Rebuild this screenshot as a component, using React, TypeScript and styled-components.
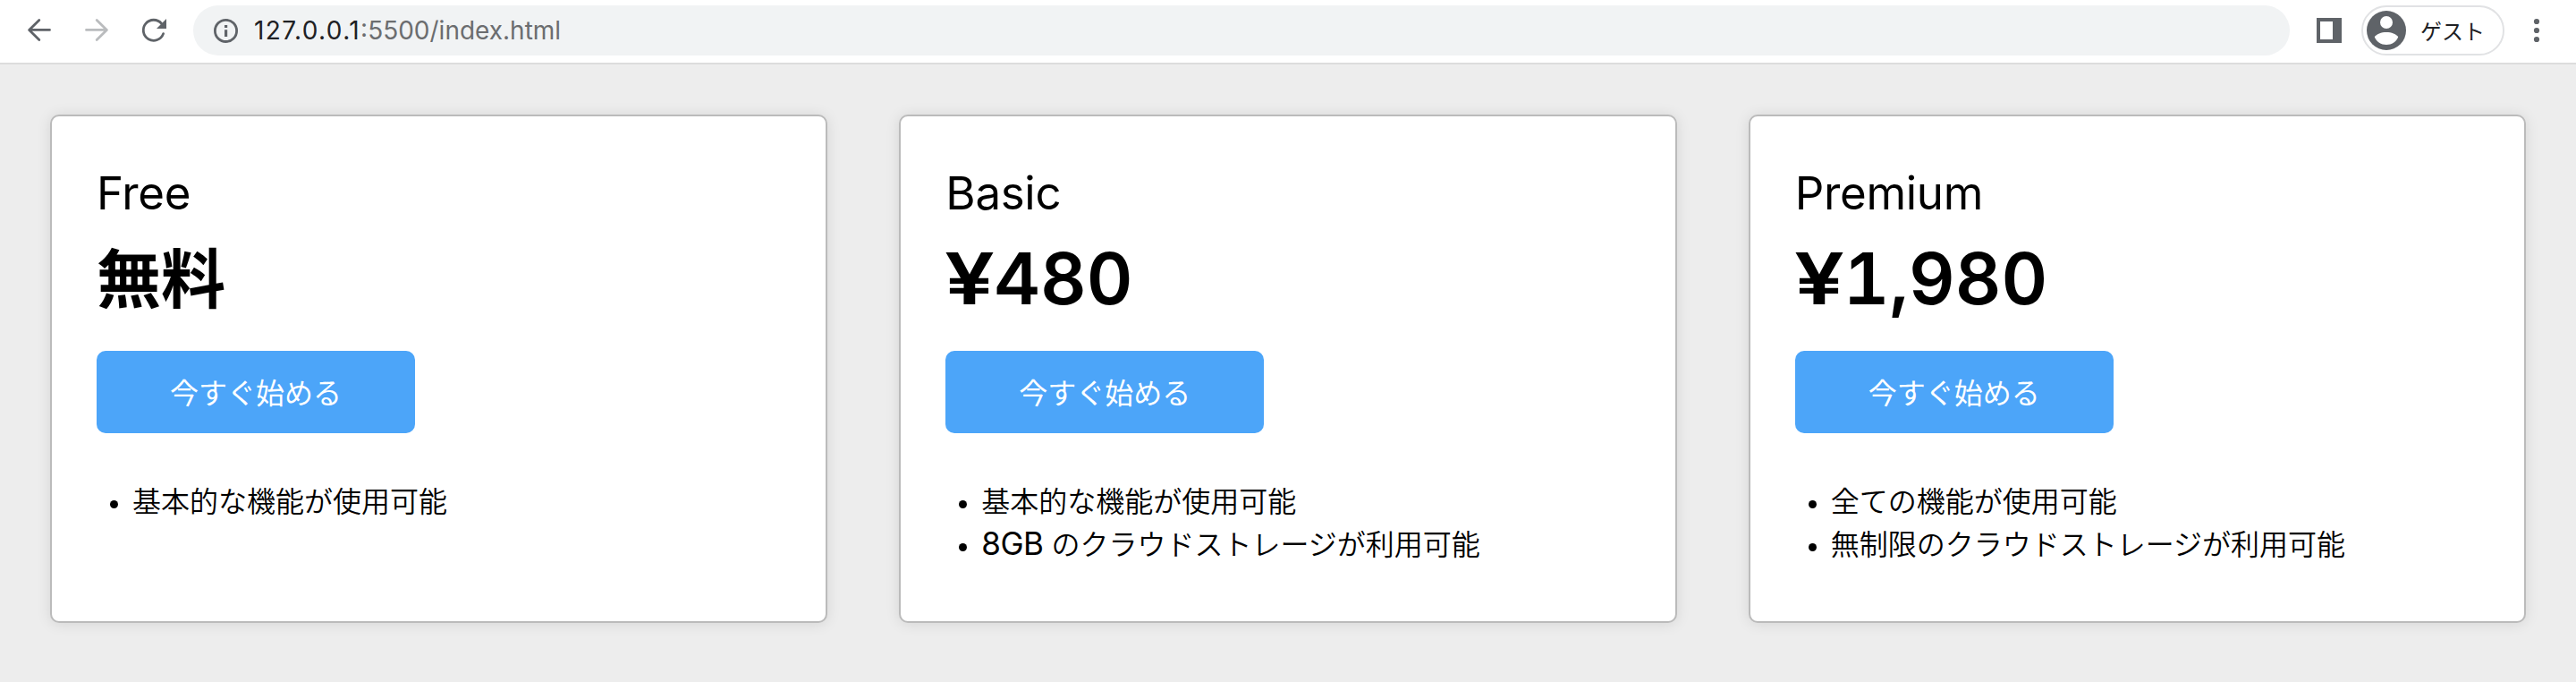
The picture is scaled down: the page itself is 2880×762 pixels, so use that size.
import React from "react";
import styled, { createGlobalStyle } from "styled-components";

const GlobalStyle = createGlobalStyle`
  * { box-sizing: border-box; }
  body {
    margin: 0;
    background: #ededed;
    color: #000;
    font-family: Inter, "Noto Sans CJK JP", sans-serif;
  }
`;

const Toolbar = styled.header`
  display: flex;
  align-items: center;
  height: 72px;
  padding: 0 24px 2px 12px;
  background: #fff;
  border-bottom: 2px solid #dcdcdc;
  color: #5f6368;
`;

const NavButton = styled.span<{ $disabled?: boolean }>`
  display: flex;
  justify-content: center;
  width: 64px;
  color: ${(p) => (p.$disabled ? "#babcbe" : "#5f6368")};
`;

const AddressBar = styled.div`
  display: flex;
  flex: 1;
  align-items: center;
  height: 56px;
  margin-left: 12px;
  padding-left: 17px;
  border-radius: 28px;
  background: #f1f3f4;
`;

const Url = styled.span`
  margin-left: 11px;
  font-size: 28px;
  line-height: 34px;
  color: #6b6d6f;
`;

const Host = styled.span`
  letter-spacing: 1.4px;
  color: #202124;
`;

const PanelIcon = styled.svg`
  margin-left: 30px;
`;

const ProfileChip = styled.div`
  display: flex;
  align-items: center;
  width: 160px;
  height: 56px;
  margin-left: 22px;
  padding-left: 4px;
  border: 2px solid #e1e2e4;
  border-radius: 28px;
`;

const ProfileName = styled.span`
  margin-left: 16px;
  font: 400 24px/36px "Noto Sans CJK JP", sans-serif;
  color: #202124;
`;

const MenuIcon = styled.svg`
  margin-left: 16px;
`;

const Plans = styled.main`
  display: grid;
  grid-template-columns: repeat(3, 1fr);
  gap: 80px;
  padding: 56px;
`;

const Card = styled.section`
  height: 568px;
  padding: 50px;
  background: #fff;
  border: 2px solid #bbb;
  border-radius: 10px;
  box-shadow: 0 1px 16px rgba(0, 0, 0, 0.1);
`;

const PlanName = styled.h2`
  height: 70px;
  margin: 0;
  font-size: 51px;
  font-weight: 400;
  line-height: 71px;
  letter-spacing: -0.3px;
`;

const Price = styled.p`
  height: 142px;
  margin: 0 0 0 -1px;
  font-size: 80px;
  font-weight: 600;
  line-height: 121px;
  font-variant-numeric: tabular-nums;
`;

const FreePrice = styled(Price)`
  margin-left: 0;
  font-family: "Noto Sans CJK JP", sans-serif;
  font-size: 72px;
  font-weight: 700;
  line-height: 113px;
`;

const Yen = styled.span`
  display: inline-block;
  width: 55px;
  transform: scaleX(1.24);
  transform-origin: left;
`;

const StartButton = styled.button`
  display: block;
  width: 356px;
  height: 92px;
  padding: 0 0 3px;
  border: 0;
  border-radius: 10px;
  background: #4ca5f9;
  color: #fff;
  font: 400 32px/48px "Noto Sans CJK JP", sans-serif;
`;

const Features = styled.ul`
  margin: 50px 0 0;
  padding: 0 0 0 15px;
  list-style: none;
  font: 350 32px/48px "Noto Sans CJK JP", sans-serif;
`;

const Feature = styled.li`
  display: flex;
  height: 48px;
  white-space: pre;

  &::before {
    content: "";
    width: 9px;
    height: 9px;
    margin: 25px 16px 0 0;
    border-radius: 50%;
    background: #000;
  }
`;

const Capacity = styled.span`
  font-family: Inter, sans-serif;
  font-size: 35px;
  font-weight: 400;
  letter-spacing: -0.6px;
  line-height: 0;
`;

type Plan = {
  name: string;
  price?: string;
  features: React.ReactNode[];
};

const plans: Plan[] = [
  { name: "Free", features: ["基本的な機能が使用可能"] },
  {
    name: "Basic",
    price: "480",
    features: [
      "基本的な機能が使用可能",
      <>
        <Capacity>8GB </Capacity>のクラウドストレージが利用可能
      </>,
    ],
  },
  {
    name: "Premium",
    price: "1,980",
    features: ["全ての機能が使用可能", "無制限のクラウドストレージが利用可能"],
  },
];

const stroke = {
  fill: "none",
  stroke: "currentColor",
  strokeWidth: 2.8,
  strokeLinecap: "round" as const,
  strokeLinejoin: "round" as const,
};

export default function App() {
  return (
    <>
      <GlobalStyle />
      <Toolbar>
        <NavButton>
          <svg width="40" height="40" {...stroke}>
            <path d="M31.5 19.4H9M19.8 8.4L8.6 19.4L19.8 30.4" />
          </svg>
        </NavButton>
        <NavButton $disabled>
          <svg width="40" height="40" {...stroke}>
            <path d="M8.5 19.4H31M20.2 8.4L31.4 19.4L20.2 30.4" />
          </svg>
        </NavButton>
        <NavButton>
          <svg width="40" height="40">
            <path d="M30.6 23.6A11.5 11.5 0 1 1 28.6 12.4" {...stroke} />
            <path d="M34 7V18H23Z" fill="currentColor" />
          </svg>
        </NavButton>
        <AddressBar>
          <svg width="40" height="40">
            <circle cx="19.5" cy="20.4" r="12.1" {...stroke} />
            <path d="M18 14H21.2V17H18ZM18 19.2H21.2V27H18Z" fill="currentColor" />
          </svg>
          <Url>
            <Host>127.0.0.1</Host>:5500/index.html
          </Url>
        </AddressBar>
        <PanelIcon width="28" height="28">
          <path d="M0 0H28V28H0ZM4 4V24H18V4Z" fill="currentColor" fillRule="evenodd" />
        </PanelIcon>
        <ProfileChip>
          <svg width="44" height="44">
            <circle cx="22" cy="22" r="22" fill="#5f6368" />
            <circle cx="22" cy="13" r="7" fill="#fff" />
            <path d="M8.8 29.5C10.5 26 16.5 24 22 24S33.5 26 35.2 29.5C33 34.5 28 38 22 38S11 34.5 8.8 29.5Z" fill="#fff" />
          </svg>
          <ProfileName>ゲスト</ProfileName>
        </ProfileChip>
        <MenuIcon width="40" height="40" fill="#5f6368">
          <circle cx="20" cy="10" r="3.1" />
          <circle cx="20" cy="20" r="3.1" />
          <circle cx="20" cy="30" r="3.1" />
        </MenuIcon>
      </Toolbar>
      <Plans>
        {plans.map((plan) => (
          <Card key={plan.name}>
            <PlanName>{plan.name}</PlanName>
            {plan.price ? (
              <Price>
                <Yen>¥</Yen>
                {plan.price}
              </Price>
            ) : (
              <FreePrice>無料</FreePrice>
            )}
            <StartButton>今すぐ始める</StartButton>
            <Features>
              {plan.features.map((feature, i) => (
                <Feature key={i}>
                  <span>{feature}</span>
                </Feature>
              ))}
            </Features>
          </Card>
        ))}
      </Plans>
    </>
  );
}
